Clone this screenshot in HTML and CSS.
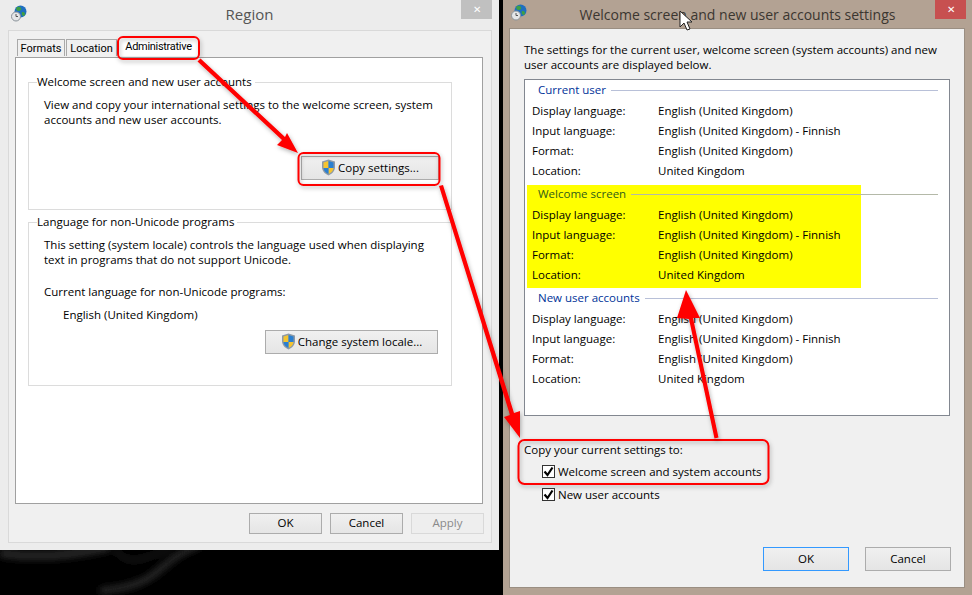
FILE: index.html
```html
<!DOCTYPE html>
<html lang="en">
<head>
  <meta charset="UTF-8">
  <title>Region</title>
  <link rel="stylesheet" href="styles.css">
</head>
<body>
  <svg class="smoke" width="500" height="50" viewBox="0 0 500 50">
    <defs><filter id="blur"><feGaussianBlur stdDeviation="3"/></filter></defs>
    <g filter="url(#blur)" fill="none" stroke="#262626">
      <path d="M0 8 C40 14 70 10 110 2" stroke-width="9"/>
      <path d="M200 0 C175 8 165 22 150 32 C135 42 115 44 100 46" stroke-width="7"/>
      <path d="M115 5 C130 25 150 10 170 4" stroke-width="5" stroke="#161616"/>
    </g>
  </svg>

  <div class="window region">
    <div class="titlebar">
      <svg class="app-icon" width="16" height="17" viewBox="0 0 16 17">
        <circle cx="9.500" cy="6.500" r="6" fill="#1f6fc0"/>
        <path d="M6 2 C9 1 11 3 10 5 C8 7 6 6 5 4 Z M11 7 C14 7 15 9 13 11 C11 11 10 9 11 7 Z" fill="#3f9f45"/>
        <circle cx="5" cy="11.500" r="4.500" fill="#e4e6e8" stroke="#8a9299"/>
        <path d="M5 9 V11.500 H7" fill="none" stroke="#555"/>
      </svg>
      <span class="title">Region</span>
      <span class="close close-idle">&#x2715;</span>
    </div>
    <div class="frame">
      <div class="tabs">
        <span class="tab tab-formats">Formats</span>
        <span class="tab tab-location">Location</span>
        <span class="tab tab-active">Administrative</span>
      </div>
      <div class="panel">
        <fieldset class="group group-welcome">
          <legend>Welcome screen and new user accounts</legend>
          <p>View and copy your international settings to the welcome screen, system accounts and new user accounts.</p>
          <div class="group-actions">
            <button class="btn btn-copy">
              <svg class="shield" width="15" height="17" viewBox="0 0 15 17"><path d="M7.500 .5 L14 2.500 V8 C14 12 11 15 7.500 16.500 C4 15 1 12 1 8 V2.500 Z" fill="#8d99a6"/><path d="M7.500 2 V9 H2.500 V3.500 Z M7.500 9 H12.500 C12.300 12 10 14 7.500 15 Z" fill="#f4c430"/><path d="M7.500 2 L12.500 3.500 V9 H7.500 Z M7.500 9 V15 C5 14 2.700 12 2.500 9 Z" fill="#2a7fd0"/></svg>
              Copy settings...
            </button>
          </div>
        </fieldset>
        <fieldset class="group group-locale">
          <legend>Language for non-Unicode programs</legend>
          <p>This setting (system locale) controls the language used when displaying text in programs that do not support Unicode.</p>
          <p class="current-label">Current language for non-Unicode programs:</p>
          <p class="current-value">English (United Kingdom)</p>
          <div class="group-actions">
            <button class="btn btn-locale">
              <svg class="shield" width="15" height="17" viewBox="0 0 15 17"><path d="M7.500 .5 L14 2.500 V8 C14 12 11 15 7.500 16.500 C4 15 1 12 1 8 V2.500 Z" fill="#8d99a6"/><path d="M7.500 2 V9 H2.500 V3.500 Z M7.500 9 H12.500 C12.300 12 10 14 7.500 15 Z" fill="#f4c430"/><path d="M7.500 2 L12.500 3.500 V9 H7.500 Z M7.500 9 V15 C5 14 2.700 12 2.500 9 Z" fill="#2a7fd0"/></svg>
              Change system locale...
            </button>
          </div>
        </fieldset>
      </div>
      <div class="footer">
        <button class="btn btn-small">OK</button>
        <button class="btn btn-small">Cancel</button>
        <button class="btn btn-small btn-disabled">Apply</button>
      </div>
    </div>
  </div>

  <div class="window welcome">
    <div class="titlebar titlebar-tan">
      <svg class="app-icon" width="16" height="17" viewBox="0 0 16 17">
        <circle cx="9.500" cy="6.500" r="6" fill="#1f6fc0"/>
        <path d="M6 2 C9 1 11 3 10 5 C8 7 6 6 5 4 Z M11 7 C14 7 15 9 13 11 C11 11 10 9 11 7 Z" fill="#3f9f45"/>
        <circle cx="5" cy="11.500" r="4.500" fill="#e4e6e8" stroke="#8a9299"/>
        <path d="M5 9 V11.500 H7" fill="none" stroke="#555"/>
      </svg>
      <span class="title">Welcome screen and new user accounts settings</span>
      <span class="close close-red">&#x2715;</span>
    </div>
    <div class="content">
      <p class="intro">The settings for the current user, welcome screen (system accounts) and new user accounts are displayed below.</p>
      <div class="settings">
        <section class="block">
          <h3><span>Current user</span></h3>
          <dl>
            <dt>Display language:</dt><dd>English (United Kingdom)</dd>
            <dt>Input language:</dt><dd>English (United Kingdom) - Finnish</dd>
            <dt>Format:</dt><dd>English (United Kingdom)</dd>
            <dt>Location:</dt><dd>United Kingdom</dd>
          </dl>
        </section>
        <section class="block block-marked">
          <h3><span>Welcome screen</span></h3>
          <dl>
            <dt>Display language:</dt><dd>English (United Kingdom)</dd>
            <dt>Input language:</dt><dd>English (United Kingdom) - Finnish</dd>
            <dt>Format:</dt><dd>English (United Kingdom)</dd>
            <dt>Location:</dt><dd>United Kingdom</dd>
          </dl>
        </section>
        <section class="block">
          <h3><span>New user accounts</span></h3>
          <dl>
            <dt>Display language:</dt><dd>English (United Kingdom)</dd>
            <dt>Input language:</dt><dd>English (United Kingdom) - Finnish</dd>
            <dt>Format:</dt><dd>English (United Kingdom)</dd>
            <dt>Location:</dt><dd>United Kingdom</dd>
          </dl>
        </section>
      </div>
      <p class="copy-label">Copy your current settings to:</p>
      <div class="check"><span class="box"><svg width="11" height="11" viewBox="0 0 11 11"><path d="M1.500 5.500 L4.500 9 L9.500 1.500" fill="none" stroke="#000" stroke-width="2.200"/></svg></span>Welcome screen and system accounts</div>
      <div class="check"><span class="box"><svg width="11" height="11" viewBox="0 0 11 11"><path d="M1.500 5.500 L4.500 9 L9.500 1.500" fill="none" stroke="#000" stroke-width="2.200"/></svg></span>New user accounts</div>
      <div class="content-footer">
        <button class="btn btn-wide btn-default">OK</button>
        <button class="btn btn-wide">Cancel</button>
      </div>
    </div>
  </div>

  <!-- red markup drawn on top of the screenshot -->
  <svg class="markup" width="972" height="595" viewBox="0 0 972 595">
    <defs>
      <filter id="soft" x="-10%" y="-10%" width="120%" height="120%">
        <feDropShadow dx="1" dy="2" stdDeviation="2" flood-color="#000" flood-opacity=".3"/>
      </filter>
    </defs>
    <g filter="url(#soft)" fill="none" stroke="#f00" stroke-width="2">
      <rect x="118" y="37" width="81" height="22" rx="5"/>
      <rect x="298.500" y="153" width="141" height="32" rx="5"/>
      <rect x="518.500" y="440" width="250" height="44" rx="6"/>
    </g>
    <g filter="url(#soft)" fill="#f00">
      <path d="M197.500 61.500 L200.500 58.500 L285 137 L287 133 L298 153 L277 145 L282 140 Z"/>
      <path d="M439 186 L443 185 L514 413 L520 411 L520 438 L504 417 L510 415 Z"/>
      <path d="M714.500 438.500 L718.500 437.500 L693 318 L700 318 L686 290 L677 318 L689 319 Z"/>
    </g>
    <path d="M680 11 V27 L684 23 L687 30 L690 29 L687 22 L692 22 Z" fill="#fff" stroke="#222"/>
  </svg>
</body>
</html>
```

FILE: styles.css
```css
* {
  box-sizing: border-box;
}

html, body {
  margin: 0;
  height: 595px;
  overflow: hidden;
}

body {
  background: #000;
  position: relative;
  font-family: "Open Sans", "Noto Sans", sans-serif;
  font-size: 11.5px;
  color: #000;
}

p {
  margin: 0;
}

.smoke {
  position: absolute;
  left: 0;
  top: 545px;
}

.window {
  position: absolute;
  top: 0;
  display: flex;
  flex-direction: column;
}

.region {
  left: 0;
  width: 499px;
  height: 550px;
  background: #ececec;
}

.welcome {
  left: 503px;
  width: 469px;
  height: 595px;
  background: #b3a293;
}

.titlebar {
  position: relative;
  height: 30px;
  flex: none;
  text-align: center;
  line-height: 29px;
  font-size: 15px;
  color: #555;
}

.titlebar-tan {
  height: 28px;
  font-size: 14px;
  color: #3b3630;
}

.app-icon {
  position: absolute;
  left: 11px;
  top: 5px;
}

.welcome .app-icon {
  left: 8px;
  top: 4px;
}

.close {
  position: absolute;
  top: 0;
  width: 31px;
  height: 19px;
  color: #fff;
  font-size: 10px;
  line-height: 19px;
}

.close-idle {
  left: 461px;
  background: #c0c0c0;
}

.close-red {
  left: 432px;
  background: #c75050;
}

.frame {
  flex: 1;
  margin: 0 7px 7px 8px;
  background: #f0f0f0;
  border: 1px solid #d9d9d9;
  padding: 8px 8px 8px 6px;
  display: flex;
  flex-direction: column;
}

.tabs {
  display: flex;
  height: 18px;
  padding-left: 2px;
  position: relative;
  font-family: Roboto, sans-serif;
  font-size: 11px;
}

.tab {
  height: 17px;
  line-height: 17px;
  border: 1px solid #a9a9a9;
  border-bottom: none;
  background: #f0f0f0;
  text-align: center;
  margin-right: 1px;
}

.tab-formats {
  width: 48px;
}

.tab-location {
  width: 51px;
}

.tab-active {
  width: 81px;
  height: 19px;
  margin-top: -2px;
  background: #fff;
  border: none;
  line-height: 19px;
  letter-spacing: -.3px;
  position: relative;
  z-index: 1;
}

.panel {
  height: 447px;
  background: #fff;
  border: 1px solid #a0a0a0;
  padding: 16px 30px 0 12px;
}

.group {
  margin: 0 0 4px;
  padding: 0 13px 0 15px;
  border: 1px solid #dcdcdc;
  min-inline-size: 0;
}

.group legend {
  padding: 0 3px 0 0;
  margin-left: -7px;
  line-height: 16px;
}

.group p {
  line-height: 15px;
}

.group-welcome {
  height: 136px;
}

.group-welcome p {
  margin-top: 7px;
}

.group-locale {
  height: 172px;
}

.group-locale p:first-of-type {
  margin-top: 7px;
}

.group-actions {
  display: flex;
  justify-content: flex-end;
}

.btn {
  font: inherit;
  color: #000;
  background: linear-gradient(#f0f0f0, #e5e5e5);
  border: 1px solid #acacac;
  padding: 0 0 2px;
  display: inline-flex;
  align-items: center;
  justify-content: center;
  gap: 2px;
}

.btn-copy {
  width: 138px;
  height: 24px;
  margin-top: 29px;
  margin-right: -1px;
}

.btn-locale {
  width: 173px;
  height: 24px;
}

.group-locale .current-label {
  margin-top: 17px;
}

.group-locale .current-value {
  margin: 8px 0 8px 19px;
}

.footer {
  display: flex;
  justify-content: flex-end;
  gap: 8px;
  margin-top: 9px;
  margin-right: -1px;
}

.btn-small {
  width: 73px;
  height: 21px;
}

.btn-disabled {
  color: #8a8a8a;
  border-color: #d9d9d9;
  background: #eee;
}

.content {
  flex: 1;
  margin: 0 7px 7px 6px;
  background: #f0f0f0;
  border: 1px solid #9a8e82;
  padding: 13px 14px 0 14px;
}

.intro {
  line-height: 15px;
  margin-bottom: 7px;
}

.settings {
  height: 337px;
  background: #fff;
  border: 1px solid #828790;
  padding: 0 11px 0 7px;
}

.block {
  position: relative;
  height: 104px;
}

.block-marked::before {
  content: "";
  position: absolute;
  left: -5px;
  top: 1px;
  width: 334px;
  height: 103px;
  background: #ff0;
}

.block h3 {
  position: relative;
  margin: 0;
  padding-left: 6px;
  font-size: 11.5px;
  font-weight: 400;
  color: #003399;
  height: 20px;
  line-height: 20px;
  display: flex;
  align-items: center;
}

.block h3::after {
  content: "";
  flex: 1;
  height: 1px;
  margin-left: 5px;
  background: #b8c0d8;
}

.block-marked h3 {
  color: #2f5d18;
}

.block-marked h3::after {
  background: #b4b9a8;
}

.block dl {
  position: relative;
  margin: 1px 0 0;
  display: grid;
  grid-template-columns: 126px 1fr;
  grid-auto-rows: 20px;
  line-height: 20px;
}

.block dd {
  margin: 0;
}

.copy-label {
  margin-top: 25px;
  margin-bottom: 1px;
  line-height: 18px;
}

.check {
  display: flex;
  align-items: center;
  gap: 3px;
  margin-left: 18px;
  height: 23px;
}

.box {
  width: 13px;
  height: 13px;
  background: #fff;
  border: 1px solid #333;
  display: flex;
  align-items: center;
  justify-content: center;
}

.content-footer {
  display: flex;
  justify-content: flex-end;
  gap: 16px;
  margin-top: 41px;
  margin-right: -1px;
}

.btn-wide {
  width: 86px;
  height: 24px;
}

.btn-default {
  border: 1px solid #3399ff;
}

.markup {
  position: absolute;
  left: 0;
  top: 0;
  z-index: 2;
  pointer-events: none;
}
```
